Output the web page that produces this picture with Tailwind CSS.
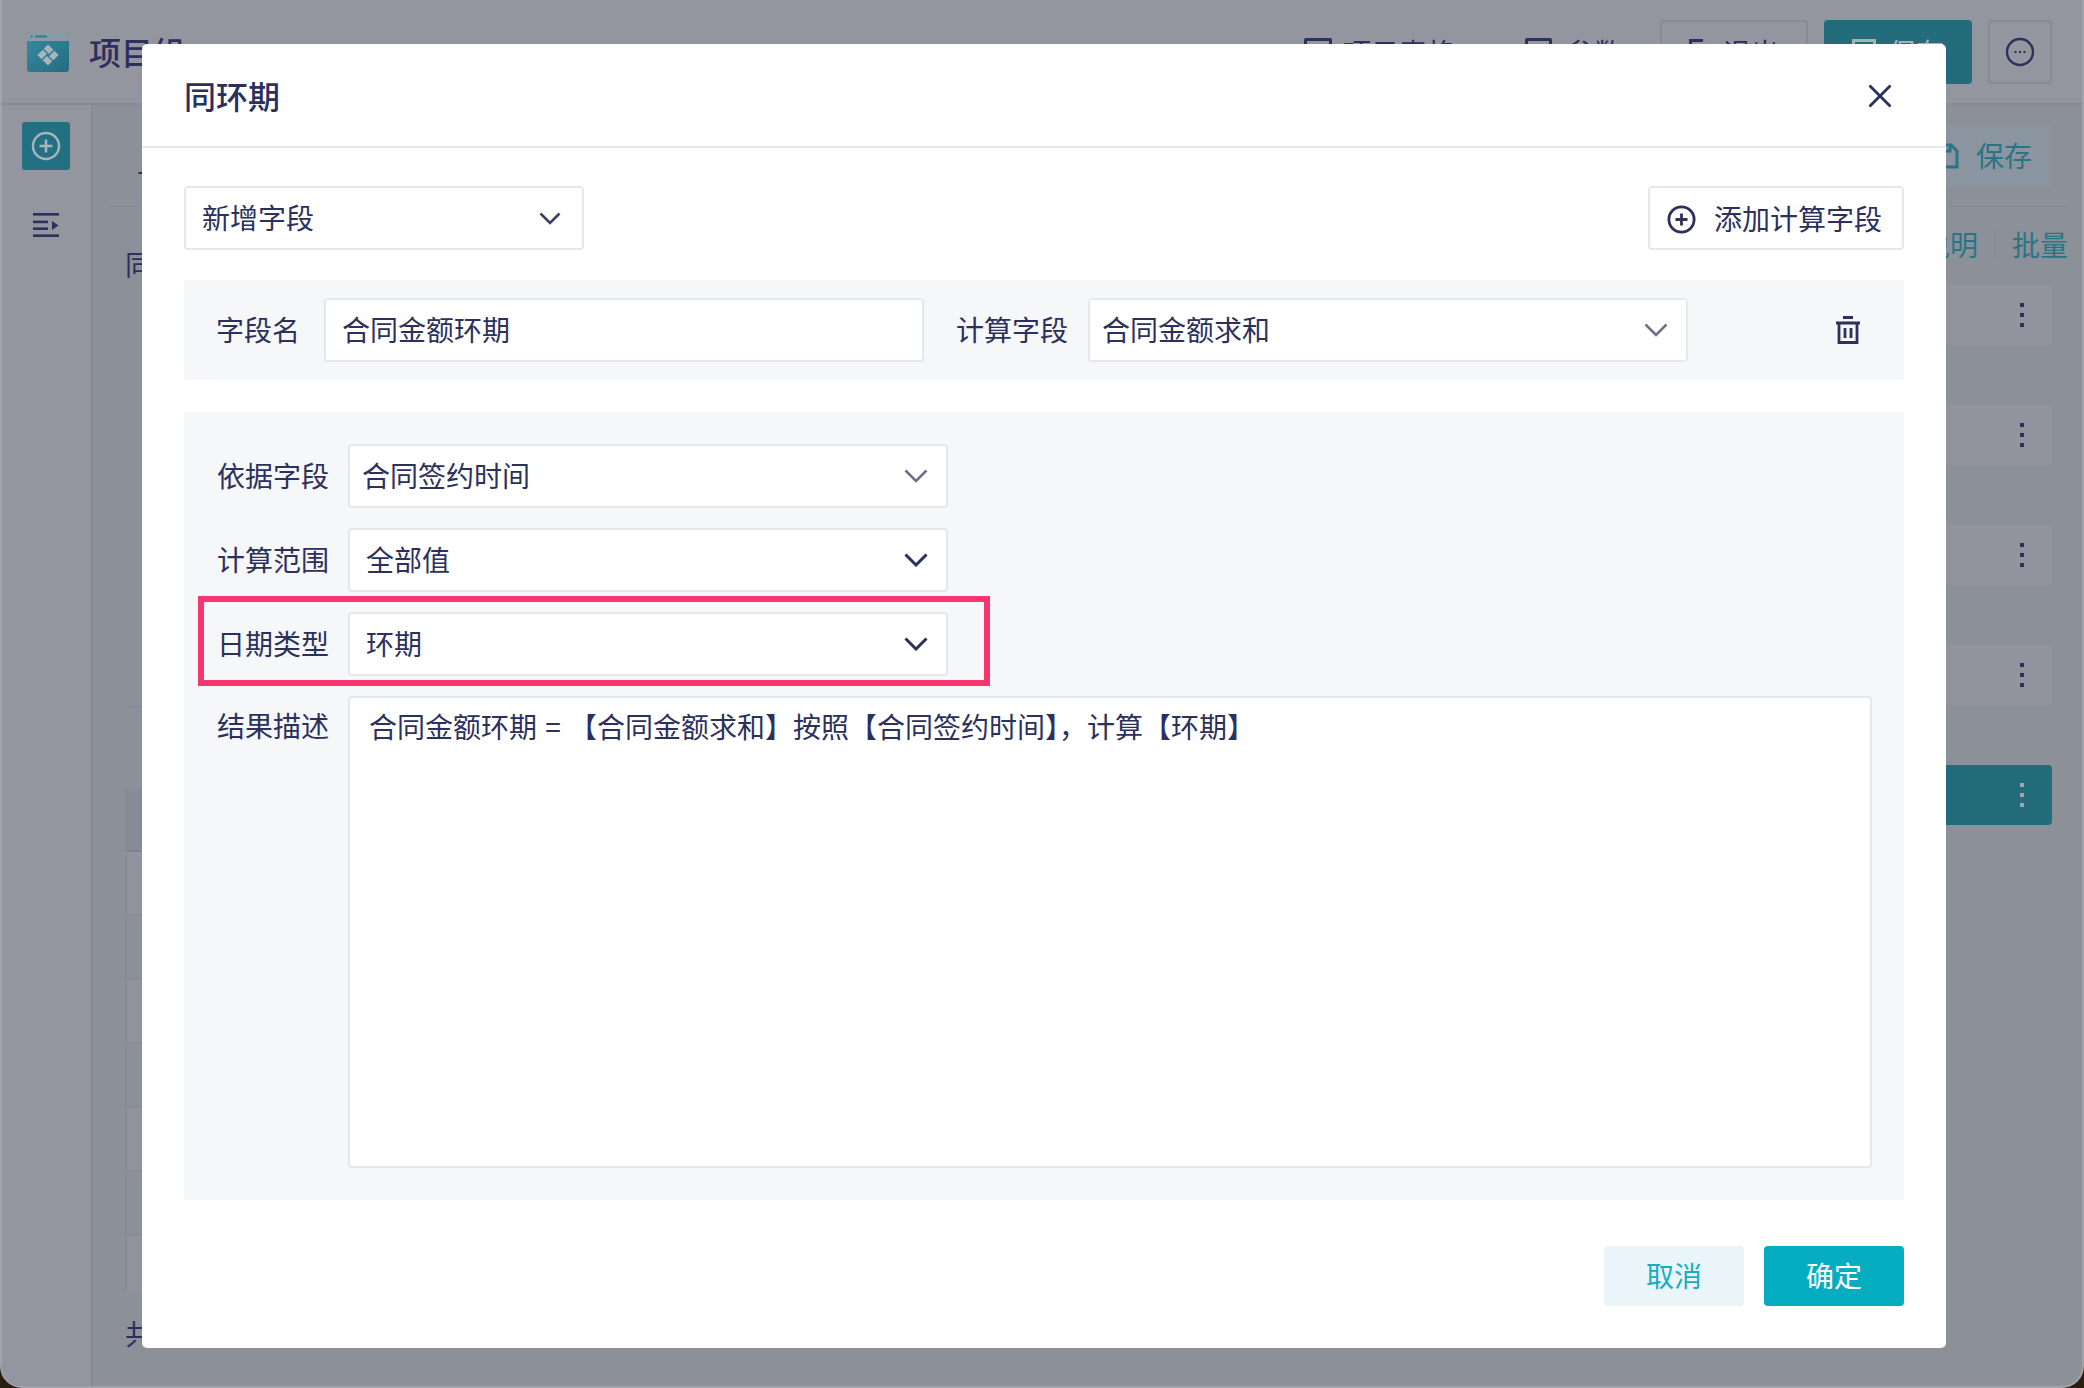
<!DOCTYPE html>
<html lang="zh-CN">
<head>
  <meta charset="UTF-8" />
  <title>同环期</title>
  <script src="https://cdn.jsdelivr.net/npm/@tailwindcss/browser@4"></script>
</head>
<body class="bg-[#2a1e10] font-['Noto_Sans_CJK_SC','Noto_Sans',sans-serif] text-[28px] text-[#2b305c]">
  <div class="relative w-[2084px] h-[1388px] overflow-hidden">
    <!-- 背景页面 -->
    <div class="w-full h-full flex flex-col rounded-b-[22px] overflow-hidden bg-[#8c9199] border-l-2 border-r-2 border-b-2 border-[#a0a3ab]">
      <!-- 顶部栏 -->
      <div class="h-[105px] shrink-0 flex items-center bg-[#93969f] border-b-2 border-[#868a95] pl-[25px] pr-[30px]">
        <svg class="w-[42px] h-[40px]" viewBox="0 0 42 40">
          <defs>
            <linearGradient id="logoBody" x1="0" y1="0" x2="1" y2="1">
              <stop offset="0" stop-color="#3a8ba0"/>
              <stop offset="1" stop-color="#236c80"/>
            </linearGradient>
          </defs>
          <rect width="42" height="40" rx="3" fill="url(#logoBody)"/>
          <path d="M0 9V3a3 3 0 0 1 3-3h36a3 3 0 0 1 3 3v6z" fill="#8a9ba5"/>
          <rect x="3.5" y="3.5" width="2" height="2" fill="#2a7f93"/>
          <rect x="8" y="3.5" width="12" height="2" fill="#2a7f93"/>
          <g transform="translate(21 23) rotate(45)" fill="#a9b4bb">
            <rect x="-7.5" y="-7.5" width="7.6" height="6"/>
            <rect x="-7.5" y="-7.5" width="7.6" height="6" transform="rotate(90)"/>
            <rect x="-7.5" y="-7.5" width="7.6" height="6" transform="rotate(180)"/>
            <rect x="-7.5" y="-7.5" width="7.6" height="6" transform="rotate(270)"/>
          </g>
        </svg>
        <span class="ml-[20px] pb-[2px] text-[32px] font-medium">项目组</span>
        <div class="ml-auto flex items-center">
          <div class="flex items-center gap-[11px] w-[221px]">
            <span class="w-[28px] h-[28px] border-[3px] border-[#2b305c] rounded-[2px]"></span>
            <span>项目表格</span>
          </div>
          <div class="flex items-center gap-[14px] w-[135px]">
            <span class="w-[27px] h-[28px] border-[3px] border-[#2b305c] rounded-[2px]"></span>
            <span>参数</span>
          </div>
          <div class="w-[148px] h-[64px] border-2 border-[#868a95] rounded-[4px] flex items-center justify-center gap-[20px]">
            <span class="w-[14px] h-[26px] border-t-[3px] border-l-[3px] border-b-[3px] border-[#2b305c]"></span>
            <span>退出</span>
          </div>
          <div class="ml-[16px] w-[148px] h-[64px] bg-[#236c7c] rounded-[4px] flex items-center justify-center gap-[12px] text-[#a9b1b8]">
            <span class="w-[24px] h-[26px] border-[3px] border-[#a9b1b8]"></span>
            <span>保存</span>
          </div>
          <div class="ml-[16px] w-[64px] h-[64px] border-2 border-[#868a95] rounded-[4px] flex items-center justify-center">
            <svg class="w-[30px] h-[30px]" viewBox="0 0 30 30" fill="none" stroke="#2b305c">
              <circle cx="15" cy="15" r="13" stroke-width="2.4"/>
              <path d="M9.5 15h2M14 15h2M18.5 15h2" stroke-width="2.2"/>
            </svg>
          </div>
        </div>
      </div>

      <div class="flex-1 flex min-h-0">
        <!-- 侧边栏 -->
        <div class="w-[91px] shrink-0 bg-[#93969f] border-r-2 border-[#858a95] flex flex-col items-center pt-[17px] pr-[1px]">
          <div class="w-[48px] h-[48px] rounded-[3px] bg-[#237083] flex items-center justify-center">
            <svg class="w-[30px] h-[30px]" viewBox="0 0 30 30" fill="none" stroke="#a9b4bb">
              <circle cx="15" cy="15" r="13" stroke-width="2.4"/>
              <path d="M15 8.5v13M8.5 15h13" stroke-width="2.6"/>
            </svg>
          </div>
          <svg class="mt-[43px] w-[26px] h-[24px]" viewBox="0 0 26 24" fill="#2b305c">
            <rect y="0" width="26" height="2.6"/>
            <rect y="7.6" width="15" height="2.6"/>
            <rect y="14.4" width="15" height="2.6"/>
            <rect y="21.4" width="26" height="2.6"/>
            <path d="M19 8l6.5 4.5-6.5 4.5z"/>
          </svg>
        </div>

        <!-- 内容区 -->
        <div class="flex-1 min-w-0 flex flex-col pl-[32px] pr-[30px]">
          <div class="-mx-[16px] h-[102px] shrink-0 flex justify-end items-start pt-[21px] pr-[16px] border-b border-[#868b94]">
            <span class="absolute left-[137px] top-[140px]">上</span>
            <div class="w-[140px] h-[60px] rounded-[4px] bg-[#8b959f] text-[#2a7585] flex items-center justify-end gap-[17px] pr-[20px]">
              <svg class="w-[24px] h-[26px]" viewBox="0 0 24 26" fill="none" stroke="#2a7585" stroke-width="3">
                <path d="M2 2h14l6 6v16H2zM7 2v6h8V2"/>
              </svg>
              <span class="pb-[2px]">保存</span>
            </div>
          </div>
          <div class="flex-1 min-h-0 flex">
            <div class="flex-1 min-w-0 flex flex-col">
              <div class="mt-[37px] h-[40px] leading-[40px]">同比环比</div>
              <div class="mt-[422px] h-[2px] bg-[#868b94]"></div>
              <div class="mt-[81px] border-l-2 border-[#868b94] h-[503px] flex flex-col">
                <div class="h-[61px] shrink-0 bg-[#868b94]"></div>
                <div class="h-[64px] shrink-0 bg-[#91949d] border-t-2 border-[#7e8390]"></div>
                <div class="h-[64px] shrink-0 bg-[#8c9199] border-t-2 border-[#868b94]"></div>
                <div class="h-[64px] shrink-0 bg-[#91949d] border-t-2 border-[#868b94]"></div>
                <div class="h-[64px] shrink-0 bg-[#8c9199] border-t-2 border-[#868b94]"></div>
                <div class="h-[64px] shrink-0 bg-[#91949d] border-t-2 border-[#868b94]"></div>
                <div class="h-[64px] shrink-0 bg-[#8c9199] border-t-2 border-[#868b94]"></div>
                <div class="h-[58px] shrink-0 bg-[#91949d] border-t-2 border-[#868b94]"></div>
              </div>
              <div class="mt-[21px] h-[40px] leading-[40px]">共 6 项 每页显示</div>
            </div>
            <div class="w-[340px] shrink-0 flex flex-col">
              <div class="mt-[17px] h-[40px] -mr-[16px] flex items-center justify-end text-[#2a7585]">
                <span>说明</span>
                <span class="mx-[16px] w-[2px] h-[32px] bg-[#868b94]"></span>
                <span>批量</span>
              </div>
              <div class="mt-[21px] flex flex-col gap-[60px]">
                <div class="h-[60px] rounded-[4px] bg-[#91949d] flex items-center justify-end pr-[28px]">
                  <svg class="w-[4px] h-[24px]" viewBox="0 0 4 24" fill="#2b305c"><path d="M0 0h4v4H0zM0 10h4v4H0zM0 20h4v4H0z"/></svg>
                </div>
                <div class="h-[60px] rounded-[4px] bg-[#91949d] flex items-center justify-end pr-[28px]">
                  <svg class="w-[4px] h-[24px]" viewBox="0 0 4 24" fill="#2b305c"><path d="M0 0h4v4H0zM0 10h4v4H0zM0 20h4v4H0z"/></svg>
                </div>
                <div class="h-[60px] rounded-[4px] bg-[#91949d] flex items-center justify-end pr-[28px]">
                  <svg class="w-[4px] h-[24px]" viewBox="0 0 4 24" fill="#2b305c"><path d="M0 0h4v4H0zM0 10h4v4H0zM0 20h4v4H0z"/></svg>
                </div>
                <div class="h-[60px] rounded-[4px] bg-[#91949d] flex items-center justify-end pr-[28px]">
                  <svg class="w-[4px] h-[24px]" viewBox="0 0 4 24" fill="#2b305c"><path d="M0 0h4v4H0zM0 10h4v4H0zM0 20h4v4H0z"/></svg>
                </div>
                <div class="h-[60px] rounded-[4px] bg-[#236c7c] flex items-center justify-end pr-[28px]">
                  <svg class="w-[4px] h-[24px]" viewBox="0 0 4 24" fill="#a0a6ad"><path d="M0 0h4v4H0zM0 10h4v4H0zM0 20h4v4H0z"/></svg>
                </div>
              </div>
            </div>
          </div>
        </div>
      </div>
    </div>

    <!-- 弹窗 -->
    <div class="absolute left-[142px] top-[44px] w-[1804px] h-[1304px] bg-white rounded-[5px] flex flex-col">
      <div class="h-[104px] shrink-0 flex items-center justify-between pl-[42px] pr-[54px] border-b-2 border-[#e6e8ef]">
        <h2 class="text-[32px] font-medium">同环期</h2>
        <svg class="w-[24px] h-[24px] mt-[2px]" viewBox="0 0 24 24" fill="none" stroke="#2b305c" stroke-width="2.8">
          <path d="M1.5 1.5l21 21M22.5 1.5l-21 21"/>
        </svg>
      </div>

      <div class="flex-1 flex flex-col px-[42px] pt-[38px]">
        <!-- 新增字段 -->
        <div class="flex justify-between">
          <div class="w-[400px] h-[64px] bg-white border-2 border-[#e6e8ef] rounded-[4px] flex items-center justify-between pl-[16px] pr-[21px]">
            <span class="pb-[2px]">新增字段</span>
            <svg class="w-[22px] h-[13px]" viewBox="0 0 22 13" fill="none" stroke="#3b3f63" stroke-width="2.6"><path d="M1.5 1.5L11 11l9.5-9.5"/></svg>
          </div>
          <div class="w-[256px] h-[64px] bg-white border-2 border-[#e6e8ef] rounded-[4px] flex items-center pl-[17px]">
            <svg class="w-[29px] h-[29px] mt-[2px]" viewBox="0 0 29 29" fill="none" stroke="#2b305c" stroke-width="2.8">
              <circle cx="14.5" cy="14.5" r="12.6"/>
              <path d="M14.5 8.5v12M8.5 14.5h12"/>
            </svg>
            <span class="ml-[18px]">添加计算字段</span>
          </div>
        </div>

        <!-- 字段名 -->
        <div class="mt-[30px] h-[100px] shrink-0 bg-[#f6f7f9] flex items-center pl-[32px]">
          <span class="w-[108px] pb-[2px]">字段名</span>
          <div class="w-[600px] h-[64px] bg-white border-2 border-[#e6e8ef] rounded-[4px] flex items-center pl-[16px] pb-[2px]">合同金额环期</div>
          <span class="ml-[32px] w-[132px] pb-[2px]">计算字段</span>
          <div class="w-[600px] h-[64px] bg-white border-2 border-[#e6e8ef] rounded-[4px] flex items-center justify-between pl-[12px] pr-[18px]">
            <span class="pb-[2px]">合同金额求和</span>
            <svg class="w-[24px] h-[14px]" viewBox="0 0 24 14" fill="none" stroke="#6d7088" stroke-width="2.6"><path d="M1.5 1.5L12 12 22.5 1.5"/></svg>
          </div>
          <svg class="ml-auto mr-[43px] w-[26px] h-[28px]" viewBox="0 0 26 28" fill="none" stroke="#2b305c" stroke-width="2.8">
            <path d="M8 1.5h10M1 7h24"/>
            <path d="M4 7v19.5h18V7M10 12v10M16 12v10"/>
          </svg>
        </div>

        <!-- 计算配置 -->
        <div class="mt-[32px] h-[788px] shrink-0 bg-[#f6f7f9] flex flex-col gap-[20px] pl-[33px] pr-[32px] pt-[32px]">
          <div class="h-[64px] shrink-0 flex items-center">
            <span class="w-[131px] pb-[2px]">依据字段</span>
            <div class="w-[600px] h-[64px] bg-white border-2 border-[#e6e8ef] rounded-[4px] flex items-center justify-between pl-[12px] pr-[18px]">
              <span class="pb-[2px]">合同签约时间</span>
              <svg class="w-[24px] h-[14px]" viewBox="0 0 24 14" fill="none" stroke="#6d7088" stroke-width="2.6"><path d="M1.5 1.5L12 12 22.5 1.5"/></svg>
            </div>
          </div>
          <div class="h-[64px] shrink-0 flex items-center">
            <span class="w-[131px] pb-[2px]">计算范围</span>
            <div class="w-[600px] h-[64px] bg-white border-2 border-[#e6e8ef] rounded-[4px] flex items-center justify-between pl-[16px] pr-[18px]">
              <span class="pb-[2px]">全部值</span>
              <svg class="w-[24px] h-[14px]" viewBox="0 0 24 14" fill="none" stroke="#2b305c" stroke-width="3"><path d="M1.5 1.5L12 12 22.5 1.5"/></svg>
            </div>
          </div>
          <div class="relative h-[64px] shrink-0 flex items-center">
            <span class="w-[131px] pb-[2px]">日期类型</span>
            <div class="w-[600px] h-[64px] bg-white border-2 border-[#e6e8ef] rounded-[4px] flex items-center justify-between pl-[16px] pr-[18px]">
              <span class="pb-[2px]">环期</span>
              <svg class="w-[24px] h-[14px]" viewBox="0 0 24 14" fill="none" stroke="#2b305c" stroke-width="3"><path d="M1.5 1.5L12 12 22.5 1.5"/></svg>
            </div>
            <div class="absolute -left-[19px] -top-[16px] w-[792px] h-[90px] border-[6px] border-[#f5366f]"></div>
          </div>
          <div class="h-[472px] shrink-0 flex items-start">
            <span class="w-[131px] leading-[48px] mt-[5px]">结果描述</span>
            <div class="flex-1 h-full bg-white border-2 border-[#e6e8ef] rounded-[4px] pl-[19px] pt-[4px] leading-[48px]">合同金额环期<span class="mx-[2px]"> = </span>【合同金额求和】按照【合同签约时间】，计算【环期】</div>
          </div>
        </div>

        <!-- 底部按钮 -->
        <div class="mt-[46px] flex justify-end gap-[20px]">
          <button class="w-[140px] h-[60px] rounded-[4px] bg-[#e9f5f8] text-[#18aec2] pb-[2px]">取消</button>
          <button class="w-[140px] h-[60px] rounded-[4px] bg-[#06adc1] text-white pb-[2px]">确定</button>
        </div>
      </div>
    </div>
  </div>
</body>
</html>
